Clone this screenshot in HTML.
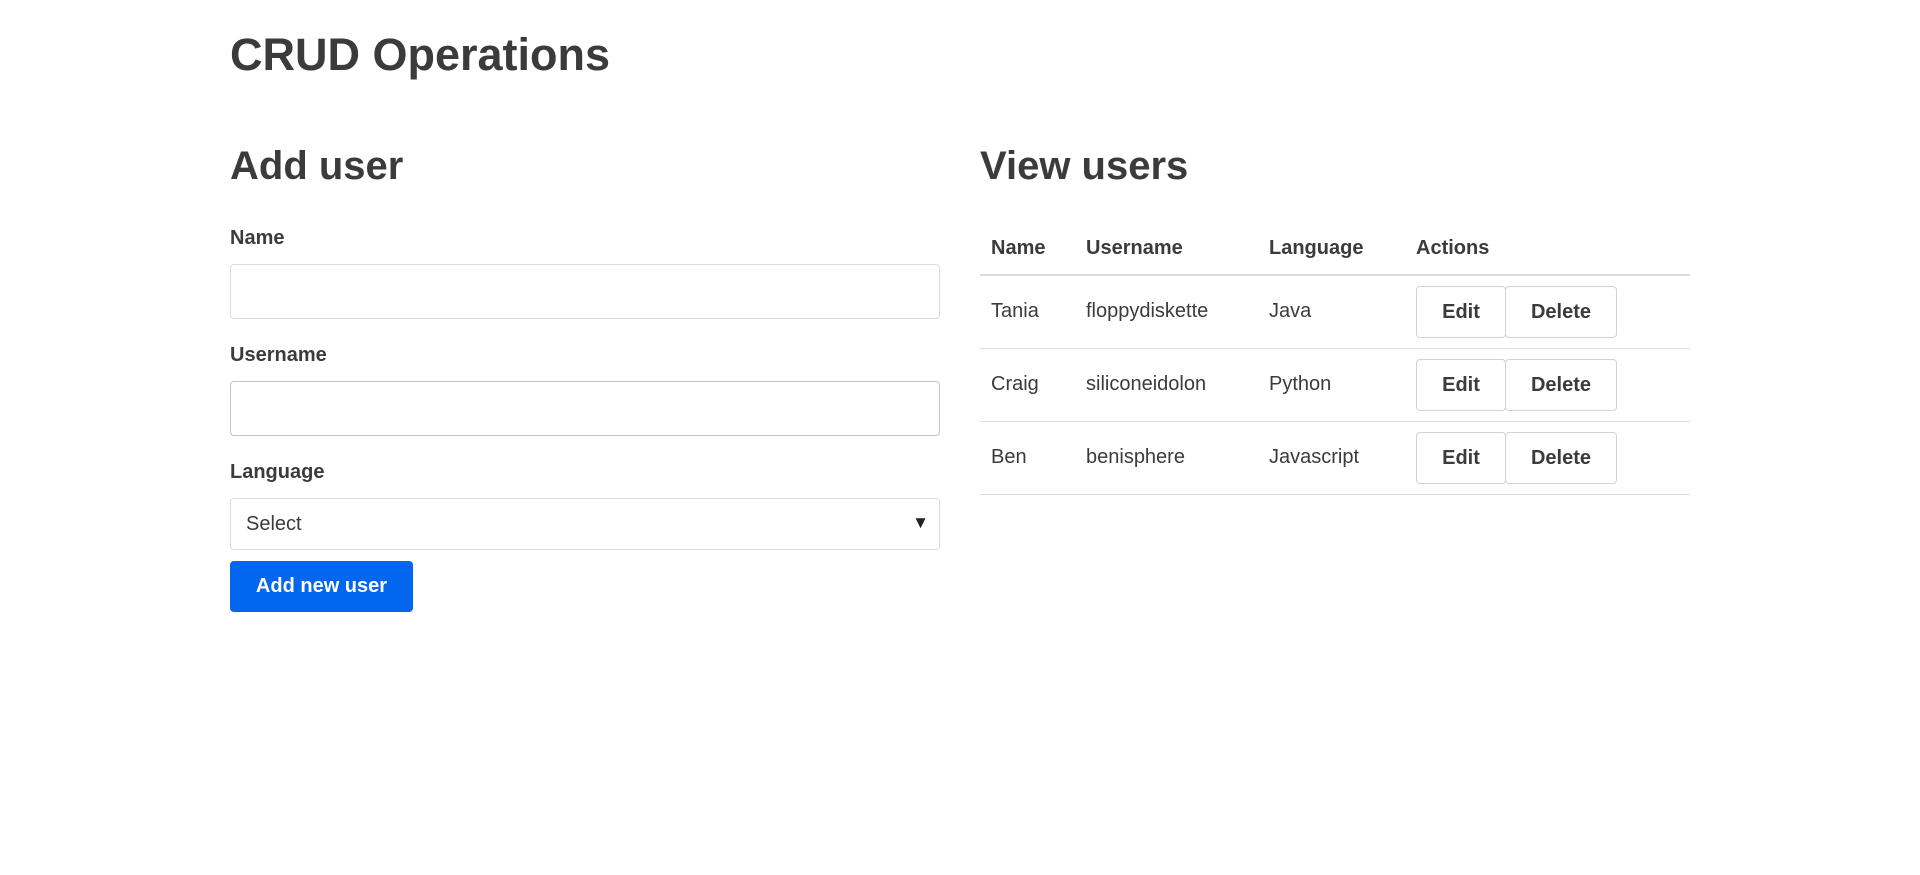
<!DOCTYPE html>
<html><head><meta charset="utf-8"><style>
*{box-sizing:border-box;margin:0;padding:0}
body{width:1920px;height:875px;background:#fff;font-family:"Liberation Sans",Arial,sans-serif;color:#3b3b3b;position:relative;overflow:hidden}
.a{position:absolute;white-space:nowrap}
h1{font-size:45px;font-weight:bold}
h2{font-size:40px;font-weight:bold}
.lbl{font-size:20px;font-weight:bold}
.inp{position:absolute;left:230px;width:710px;border:1px solid #dcdcdc;border-radius:4px;background:#fff}
.btn{position:absolute;border:1px solid #d2d2d2;border-radius:4px;background:#fff;font-size:20px;font-weight:bold;display:flex;align-items:center;justify-content:center;height:52px;top:0}
.hl{position:absolute;left:980px;width:710px;height:1px;background:#dedede}
.td{font-size:20px}
.th{font-size:20px;font-weight:bold}
</style></head><body>
<h1 class="a" style="left:230px;top:29px">CRUD Operations</h1>
<h2 class="a" style="left:230px;top:144px">Add user</h2>
<h2 class="a" style="left:980px;top:144px">View users</h2>

<div class="a lbl" style="left:230px;top:227px">Name</div>
<div class="inp" style="top:264px;height:55px"></div>
<div class="a lbl" style="left:230px;top:344px">Username</div>
<div class="inp" style="top:381px;height:55px;border-color:#c4c4c4"></div>
<div class="a lbl" style="left:230px;top:461px">Language</div>
<div class="inp" style="top:498px;height:52px"><span class="a" style="left:15px;top:14px;font-size:20px">Select</span><span class="a" style="right:10px;top:14px;font-size:17px;color:#222">▼</span></div>
<div class="a" style="left:230px;top:561px;width:183px;height:51px;background:#0366ee;border-radius:4px;color:#fff;font-size:20px;font-weight:bold;display:flex;align-items:center;justify-content:center">Add new user</div>

<div class="a th" style="left:991px;top:237px">Name</div>
<div class="a th" style="left:1086px;top:237px">Username</div>
<div class="a th" style="left:1269px;top:237px">Language</div>
<div class="a th" style="left:1416px;top:237px">Actions</div>
<div class="hl" style="top:274px;height:2px"></div>

<div class="a td" style="left:991px;top:300px">Tania</div>
<div class="a td" style="left:1086px;top:300px">floppydiskette</div>
<div class="a td" style="left:1269px;top:300px">Java</div>
<div class="a" style="left:0;top:286px"><div class="btn" style="left:1416px;width:90px">Edit</div><div class="btn" style="left:1505px;width:112px">Delete</div></div>
<div class="hl" style="top:348px"></div>

<div class="a td" style="left:991px;top:373px">Craig</div>
<div class="a td" style="left:1086px;top:373px">siliconeidolon</div>
<div class="a td" style="left:1269px;top:373px">Python</div>
<div class="a" style="left:0;top:359px"><div class="btn" style="left:1416px;width:90px">Edit</div><div class="btn" style="left:1505px;width:112px">Delete</div></div>
<div class="hl" style="top:421px"></div>

<div class="a td" style="left:991px;top:446px">Ben</div>
<div class="a td" style="left:1086px;top:446px">benisphere</div>
<div class="a td" style="left:1269px;top:446px">Javascript</div>
<div class="a" style="left:0;top:432px"><div class="btn" style="left:1416px;width:90px">Edit</div><div class="btn" style="left:1505px;width:112px">Delete</div></div>
<div class="hl" style="top:494px"></div>
</body></html>
